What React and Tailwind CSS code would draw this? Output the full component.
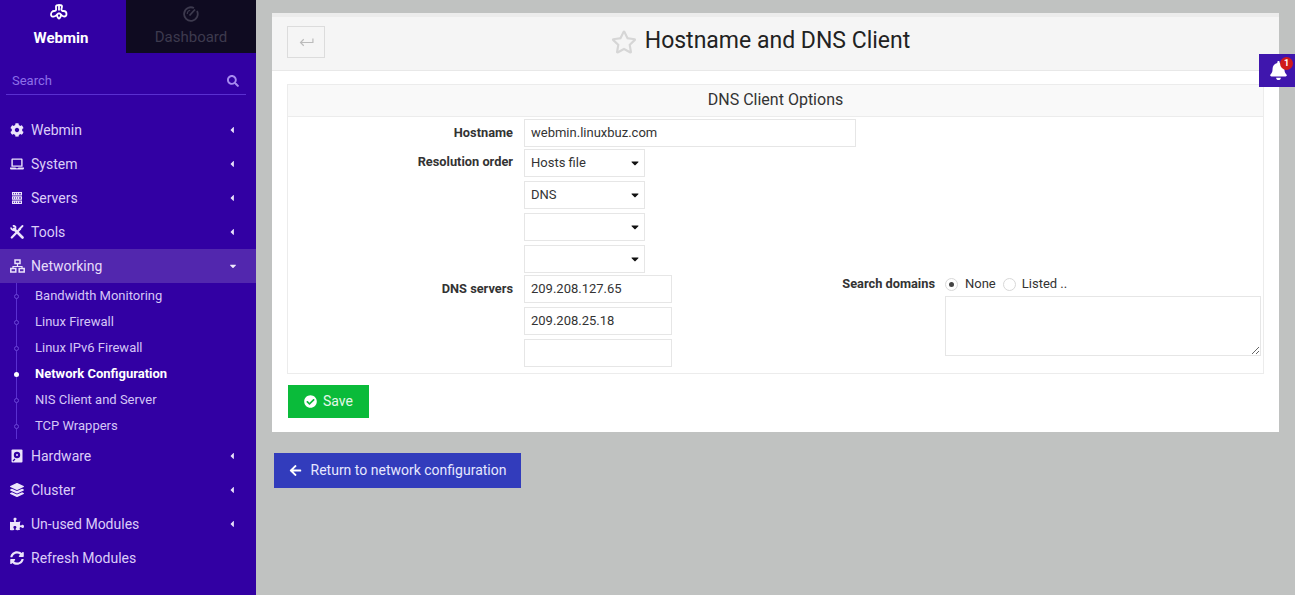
import { FaCog, FaLaptop, FaLayerGroup, FaPuzzlePiece, FaSyncAlt, FaSearch, FaCheckCircle, FaArrowLeft, FaBell, FaCaretLeft, FaCaretDown, FaRegStar } from 'react-icons/fa';

const ServerIcon = ({ className }) => (
  <svg viewBox="0 0 14 14" className={className} fill="currentColor">
    <path fillRule="evenodd" d="M2 1h10v3.600H2V1Zm1 1.300v1h1v-1H3Zm2 0v1h1v-1H5Zm2 0v1h1v-1H7Zm2 0v1h2v-1H9Z" />
    <path fillRule="evenodd" d="M2 5.200h10v3.600H2V5.200Zm1 1.300v1h1v-1H3Zm2 0v1h1v-1H5Zm2 0v1h1v-1H7Zm2 0v1h2v-1H9Z" />
    <path fillRule="evenodd" d="M2 9.400h10V13H2V9.400Zm1 1.300v1h1v-1H3Zm2 0v1h1v-1H5Zm2 0v1h1v-1H7Zm2 0v1h2v-1H9Z" />
  </svg>
);

const DriveIcon = ({ className }) => (
  <svg viewBox="0 0 14 14" className={className}>
    <rect x="1.500" y="0.500" width="11" height="13" rx="1" fill="currentColor" />
    <circle cx="7" cy="6" r="3.200" fill="#3200a3" />
    <circle cx="7" cy="6" r="1" fill="currentColor" />
    <path d="M3 12l2-2" stroke="#3200a3" strokeWidth="1.200" />
  </svg>
);

const ToolsIcon = ({ className }) => (
  <svg viewBox="0 0 14 14" className={className} fill="none" stroke="currentColor">
    <path d="M4 4L12.500 12.500" strokeWidth="2.600" strokeLinecap="round" />
    <path d="M1 2.500a3 3 0 0 0 4.200 2.500L5.500 2A3 3 0 0 0 2.800 .8" strokeWidth="1.800" />
    <path d="M1.800 12.500L10 4" strokeWidth="2.200" strokeLinecap="round" />
    <path d="M9.500 4L12.500 1" strokeWidth="1.800" strokeLinecap="round" />
  </svg>
);

const NetworkIcon = ({ className }) => (
  <svg viewBox="0 0 15 14" className={className} fill="none" stroke="currentColor" strokeWidth="1.500">
    <rect x="5" y="1" width="5" height="3.500" />
    <path d="M7.500 4.500v3M3 9.500V7.500h9v2" strokeWidth="1.200" />
    <rect x="0.800" y="9.500" width="5" height="3.500" />
    <rect x="9.200" y="9.500" width="5" height="3.500" />
  </svg>
);

const menuTop = [
  { label: 'Webmin', icon: FaCog },
  { label: 'System', icon: FaLaptop },
  { label: 'Servers', icon: ServerIcon },
  { label: 'Tools', icon: ToolsIcon },
];

const subItems = ['Bandwidth Monitoring', 'Linux Firewall', 'Linux IPv6 Firewall', 'Network Configuration', 'NIS Client and Server', 'TCP Wrappers'];

const menuBottom = [
  { label: 'Hardware', icon: DriveIcon, caret: true },
  { label: 'Cluster', icon: FaLayerGroup, caret: true },
  { label: 'Un-used Modules', icon: FaPuzzlePiece, caret: true },
  { label: 'Refresh Modules', icon: FaSyncAlt },
];

const MenuItem = ({ item }) => {
  const Icon = item.icon;
  return (
    <div className="h-[34px] flex items-center pl-[10px] pr-[19px] text-[14px] text-[#dccdf8]">
      <Icon className="w-[14px] h-[14px] text-[#ece4fb]" />
      <span className="ml-[7px] flex-1">{item.label}</span>
      {item.caret !== false && <FaCaretLeft className="w-[10px] h-[10px] text-[#e8e0fa]" />}
    </div>
  );
};

const WebminLogo = () => (
  <svg viewBox="0 0 18 18" className="w-[18px] h-[18px] mr-[5px]" fill="none" stroke="white" strokeWidth="1.800">
    <path d="M6 2.500C6 1.500 7 1 9 1s3 .5 3 1.500c0 1.200-.6 2-.6 3 0 1 1 1.500 2.100 1.500 1.500 0 3 1 3 3 0 1.500-1 2.500-2.300 2.500-1.500 0-2-1-3-1.500-.7 2-1.200 3.500-2.200 3.500s-1.500-1.500-2.200-3.500c-1 .5-1.500 1.500-3 1.500C2.100 13 1 12 1 10.500c0-2 1.500-3.500 3-3.500 1.100 0 2.100-.5 2.100-1.500S6 3.700 6 2.500Z" />
    <path d="M9 1.500v5M9 9l-2.500 2M9 9l2.500 2" />
  </svg>
);

const DashIcon = () => (
  <svg viewBox="0 0 16 16" className="w-[16px] h-[16px]" fill="none" stroke="currentColor">
    <path d="M11 2a6.800 6.800 0 1 0 3 3" strokeWidth="1.800" />
    <path d="M6.500 9.500L12 3.500" strokeWidth="1.800" />
    <path d="M4.200 8a3.800 3.800 0 0 1 3-3.700" strokeWidth="1.100" />
  </svg>
);

const Sidebar = () => (
  <aside className="w-[256px] shrink-0 bg-[#3200a3] flex flex-col">
    <div className="flex h-[53px]">
      <div className="w-[126px] flex flex-col items-center pt-[4px] pr-[4px] text-white">
        <WebminLogo />
        <span className="mt-[7px] text-[15px] font-bold leading-[18px]">Webmin</span>
      </div>
      <div className="w-[130px] bg-[#0f0b21] flex flex-col items-center pt-[6px] text-[#3d3a4e]">
        <DashIcon />
        <span className="mt-[6px] text-[15px] leading-[18px]">Dashboard</span>
      </div>
    </div>
    <div className="ml-[6px] w-[240px] mt-[18px] h-[24px] flex items-center justify-between pl-[6px] pr-[7px] pb-[4px] border-b border-[#5a2fd0] text-[13px] text-[#8d6fe8]">
      <span>Search</span>
      <FaSearch className="w-[12px] h-[12px] text-[#a78bf0]" />
    </div>
    <nav className="mt-[18px]">
      {menuTop.map((item) => <MenuItem key={item.label} item={item} />)}
      <div className="h-[34px] flex items-center pl-[10px] pr-[18px] bg-[#5227ae] text-[14px] text-[#e6dcfa]">
        <NetworkIcon className="w-[15px] h-[14px] text-[#ece4fb]" />
        <span className="ml-[6px] flex-1">Networking</span>
        <FaCaretDown className="w-[10px] h-[10px] text-[#f0eafc]" />
      </div>
      <div className="relative">
        <div className="absolute left-[16px] top-0 bottom-0 w-px bg-[#5a2fd0]" />
        {subItems.map((name) => {
          const active = name === 'Network Configuration';
          return (
            <div key={name} className="relative h-[26px] flex items-center pl-[35px] text-[13px]">
              <span className={active ? 'absolute left-[14px] w-[5px] h-[5px] rounded-full bg-white' : 'absolute left-[14px] w-[5px] h-[5px] rounded-full border border-[#6a45d6] bg-[#3200a3]'} />
              <span className={active ? 'font-bold text-white' : 'text-[#d5c6f6]'}>{name}</span>
            </div>
          );
        })}
      </div>
      {menuBottom.map((item) => <MenuItem key={item.label} item={{ caret: false, ...item }} />)}
    </nav>
  </aside>
);

const inputClass = 'h-[28px] border border-[#e6e6e6] bg-white px-[6px] text-[13px] text-[#333] outline-none';

const Select = ({ value }) => (
  <div className="relative w-[121px]">
    <select className={`${inputClass} w-full appearance-none`} defaultValue={value}>
      <option>{value}</option>
    </select>
    <FaCaretDown className="absolute right-[4px] top-[8px] w-[12px] h-[12px] text-[#111]" />
  </div>
);

const Label = ({ children, className = '' }) => (
  <div className={`text-right text-[12.800px] font-bold text-[#333] ${className}`}>{children}</div>
);

const Form = () => (
  <div className="border border-[#ececec]">
    <div className="h-[32px] flex items-center justify-center pb-[2px] bg-[#f9f9f9] border-b border-[#ececec] text-[16px] text-[#333]">DNS Client Options</div>
    <div className="pt-[2px] pb-[6px]">
      <div className="flex items-start">
        <Label className="w-[225px] pt-[4px]">Hostname</Label>
        <input readOnly value="webmin.linuxbuz.com" className={`${inputClass} ml-[11px] w-[332px] pb-[2px]`} />
      </div>
      <div className="flex items-start mt-[2px]">
        <Label className="w-[225px] pt-[3px]">Resolution order</Label>
        <div className="ml-[11px] flex flex-col gap-[4px]">
          <Select value="Hosts file" />
          <Select value="DNS" />
          <Select value="" />
          <Select value="" />
        </div>
      </div>
      <div className="flex items-start mt-[2px]">
        <Label className="w-[225px] pt-[4px]">DNS servers</Label>
        <div className="ml-[11px] w-[148px] flex flex-col gap-[4px]">
          <input readOnly value="209.208.127.65" className={`${inputClass} w-full pb-[2px]`} />
          <input readOnly value="209.208.25.18" className={`${inputClass} w-full pb-[2px]`} />
          <input readOnly value="" className={`${inputClass} w-full`} />
        </div>
        <Label className="w-[263px] leading-[17px]">Search domains</Label>
        <div className="ml-[10px] w-[316px] flex flex-col">
          <div className="h-[21px] flex items-center pb-[3px] text-[13px] text-[#333]">
            <span className="w-[13px] h-[13px] rounded-full border border-[#d8d8d8] flex items-center justify-center">
              <span className="w-[5px] h-[5px] rounded-full bg-[#444]" />
            </span>
            <span className="ml-[7px]">None</span>
            <span className="ml-[7px] w-[13px] h-[13px] rounded-full border border-[#d8d8d8]" />
            <span className="ml-[6px]">Listed ..</span>
          </div>
          <textarea readOnly className="h-[60px] w-full border border-[#e6e6e6] bg-white outline-none" />
        </div>
      </div>
    </div>
  </div>
);

const App = () => (
  <div className="h-[595px] flex bg-[#c0c2c1] overflow-hidden" style={{ fontFamily: 'Roboto, "Liberation Sans", sans-serif' }}>
    <Sidebar />
    <main className="flex-1 relative pt-[13px]">
      <div className="ml-[16px] w-[1007px] h-[419px] bg-white flex flex-col">
        <div className="h-[4px] bg-[#ececec]" />
        <div className="relative h-[54px] flex items-center justify-center pr-[30px] pb-[4px] bg-[#f5f5f5] border-b border-[#e8e8e8]">
          <div className="absolute left-[15px] top-[9px] w-[38px] h-[32px] flex items-center justify-center border border-[#dcdcdc] text-[#bbb]">
            <svg viewBox="0 0 16 12" className="w-[15px] h-[11px]" fill="none" stroke="currentColor" strokeWidth="1.300">
              <path d="M15 1.500v4.500H1.500M5 2.500L1.500 6 5 9.500" />
            </svg>
          </div>
          <FaRegStar className="w-[26px] h-[26px] text-[#d6d6d6]" />
          <h1 className="ml-[8px] text-[23px] text-[#222]">Hostname and DNS Client</h1>
        </div>
        <div className="px-[15px] pt-[13px]">
          <Form />
          <button className="ml-[1px] mt-[11px] w-[81px] h-[33px] flex items-center justify-center gap-[6px] bg-[#0abb3a] text-[#e4f8e9] text-[14px]">
            <FaCheckCircle className="w-[13px] h-[13px] text-white" />
            Save
          </button>
        </div>
      </div>
      <button className="ml-[18px] mt-[21px] w-[247px] h-[35px] flex items-center justify-center gap-[9px] bg-[#323cbc] text-[14px] text-[#e6e8ff]">
        <FaArrowLeft className="w-[13px] h-[13px] text-white" />
        Return to network configuration
      </button>
      <div className="absolute right-0 top-[54px] w-[36px] h-[33px] flex items-center justify-center pl-[3px] bg-[#3f16ad]">
        <FaBell className="w-[19px] h-[19px] text-white" />
        <span className="absolute right-[2px] top-[3px] w-[13px] h-[13px] rounded-full bg-[#d01a1a] text-white text-[9px] font-bold flex items-center justify-center">1</span>
      </div>
    </main>
  </div>
);

export default App;
